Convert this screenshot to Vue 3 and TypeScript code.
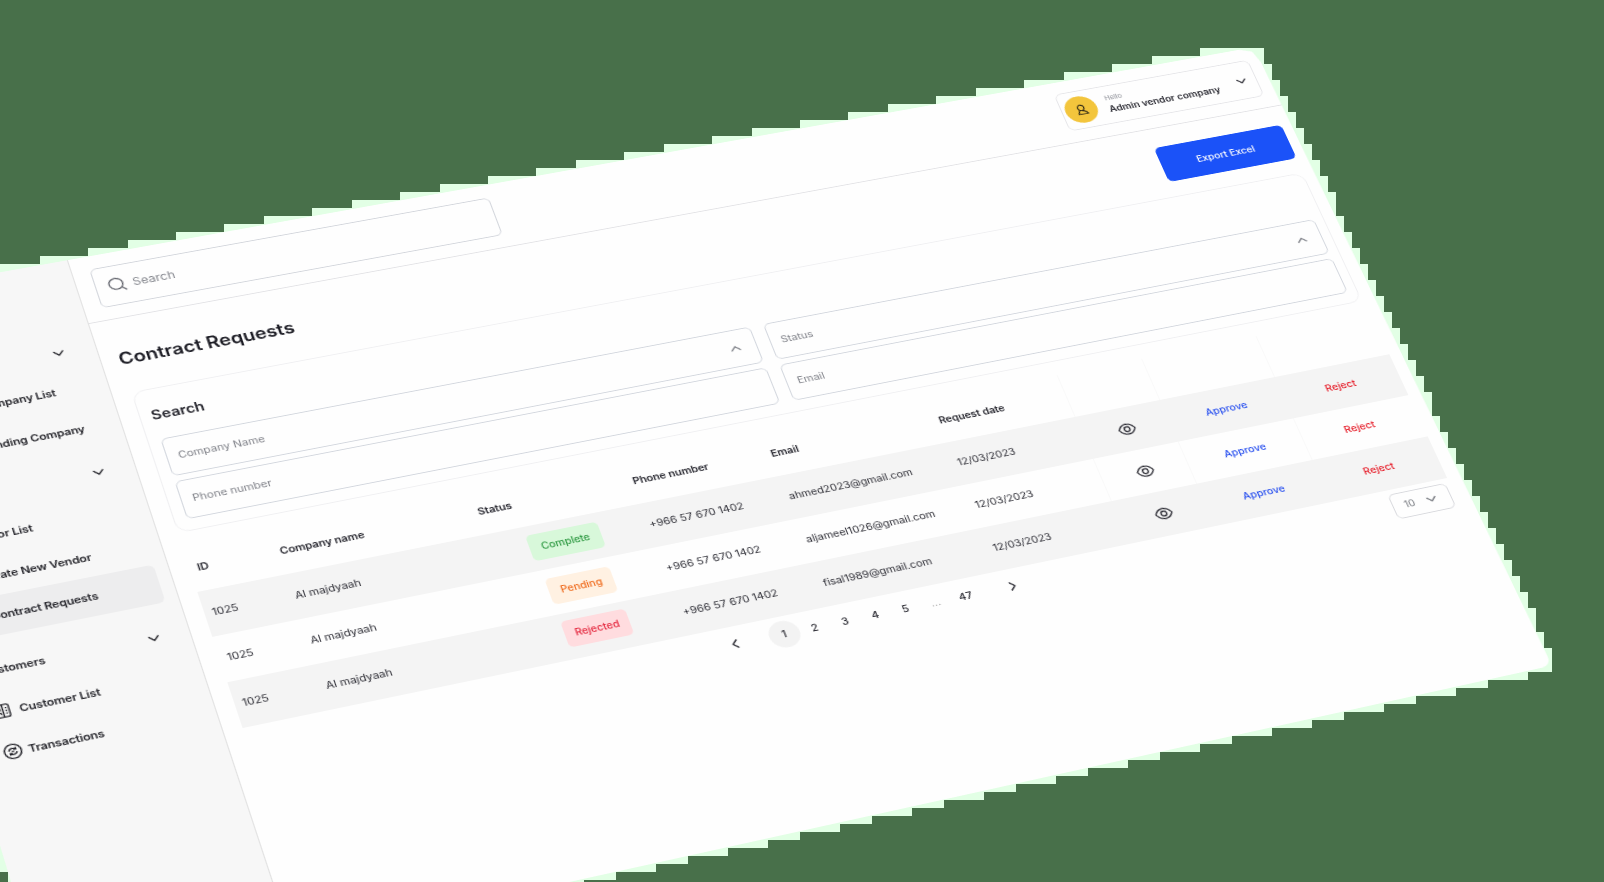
<script setup lang="ts">
interface Request {
  id: string
  company: string
  status: string
  phone: string
  email: string
  date: string
}

const requests: Request[] = [
  { id: '1025', company: 'Al majdyaah', status: 'Complete', phone: '+966 57 670 1402', email: 'ahmed2023@gmail.com', date: '12/03/2023' },
  { id: '1025', company: 'Al majdyaah', status: 'Pending', phone: '+966 57 670 1402', email: 'aljameel1026@gmail.com', date: '12/03/2023' },
  { id: '1025', company: 'Al majdyaah', status: 'Rejected', phone: '+966 57 670 1402', email: 'fisal1989@gmail.com', date: '12/03/2023' },
]

const pages: string[] = ['1', '2', '3', '4', '5', '...', '47']

// Page geometry, measured from the corner where the sidebar meets the header rule.
const LEFT = -216
const TOP = -76
const RIGHT = 1200
const BOTTOM = 686

// Coefficients of the perspective projection.
const a = 1274.6 / 1184
const b = 125.4 / 462
const c = 89
const d = -209.7 / 1184
const e = 377.5 / 462
const f = 324
const g = 0.07064 / 1184
const h = -0.04165 / 462

const pageStyle = {
  transform: `matrix3d(${a},${d},0,${g},${b},${e},0,${h},0,0,1,0,${c},${f},0,1) translate(${LEFT}px,${TOP}px)`,
}

type Point = [number, number]

function project(x: number, y: number): Point {
  const w = g * x + h * y + 1
  return [(a * x + b * y + c) / w, (d * x + e * y + f) / w]
}

// Stepped mat behind the page: every 8px block the page touches.
const STEP = 8
const corners: Point[] = [
  project(LEFT, TOP),
  project(RIGHT - 28, TOP),
  project(RIGHT - 12, TOP + 5),
  project(RIGHT - 7, TOP + 20),
  project(RIGHT, BOTTOM),
  project(LEFT, BOTTOM),
]

function span(y0: number, y1: number): Point | null {
  const xs: number[] = []
  corners.forEach((p, i) => {
    const q = corners[(i + 1) % corners.length]
    if (p[1] >= y0 && p[1] <= y1) xs.push(p[0])
    for (const y of [y0, y1]) {
      if ((p[1] - y) * (q[1] - y) < 0) xs.push(p[0] + ((y - p[1]) / (q[1] - p[1])) * (q[0] - p[0]))
    }
  })
  return xs.length ? [Math.min(...xs), Math.max(...xs)] : null
}

let mat = ''
for (let y = 0; y < 888; y += STEP) {
  const s = span(y, y + STEP)
  if (!s) continue
  const x0 = Math.floor(s[0] / STEP) * STEP
  const x1 = Math.ceil(s[1] / STEP) * STEP
  mat += `M${x0} ${y}H${x1}V${y + STEP}H${x0}Z`
}
</script>

<template>
  <div class="stage">
    <svg class="mat" width="1604" height="882" viewBox="0 0 1604 882"><path :d="mat" /></svg>
    <div class="page" :style="pageStyle">
      <aside class="sidebar">
        <div class="section"><span>Companies</span><svg class="chev" viewBox="0 0 12 12"><path d="M1.5 4 6 8.5 10.5 4" /></svg></div>
        <div class="item deep first">Company List</div>
        <div class="item deep second">Pending Company</div>
        <div class="section vendors"><span>Vendors</span><svg class="chev" viewBox="0 0 12 12"><path d="M1.5 4 6 8.5 10.5 4" /></svg></div>
        <div class="item"><i></i>Vendor List</div>
        <div class="item"><i></i>Create New Vendor</div>
        <div class="item active"><i></i>Contract Requests</div>
        <div class="section customers"><span>Customers</span><svg class="chev" viewBox="0 0 12 12"><path d="M1.5 4 6 8.5 10.5 4" /></svg></div>
        <div class="item">
          <svg class="glyph" viewBox="0 0 18 18"><rect x="2" y="2" width="14" height="14" rx="2" /><path d="M10 2v14M12.500 6h1.500M12.500 9h1.500M12.500 12h1.500M4 13c0-3 4-3 4 0" /><circle cx="6" cy="7.500" r="1.500" /></svg>
          Customer List
        </div>
        <div class="item last">
          <svg class="glyph" viewBox="0 0 18 18"><circle cx="9" cy="9" r="7.800" /><path d="M5.500 8.500C5.500 5.500 9.500 5 11.500 6.500M12 4.800v2.200h-2.200M12.500 9.500c0 3-4 3.500-6 2M6 13.200V11h2.200M8 9h2" /></svg>
          Transactions
        </div>
      </aside>
      <main class="main">
        <header class="header">
          <div class="searchbox">
            <svg viewBox="0 0 18 18"><circle cx="8" cy="8" r="6.700" /><path d="m13 13 4 4" /></svg>
            <span>Search</span>
          </div>
          <div class="profile">
            <div class="avatar"><svg viewBox="0 0 16 16"><circle cx="7.500" cy="5" r="3.600" /><path d="M5 8.500 2.500 14M8 9.500c3 0 5 2 6 4.500M2 14h12.500" /></svg></div>
            <div class="who"><small>Hello</small><b>Admin vendor company</b></div>
            <svg class="chev" viewBox="0 0 12 12"><path d="M1.500 4 6 8.500 10.500 4" /></svg>
          </div>
        </header>
        <div class="titlebar">
          <h1>Contract Requests</h1>
          <button>Export Excel</button>
        </div>
        <section class="panel">
          <h2>Search</h2>
          <div class="fields">
            <div class="field">Company Name<svg class="chev" viewBox="0 0 12 12"><path d="M1.500 8 6 3.500 10.500 8" /></svg></div>
            <div class="field">Status<svg class="chev" viewBox="0 0 12 12"><path d="M1.500 8 6 3.500 10.500 8" /></svg></div>
            <div class="field">Phone number</div>
            <div class="field">Email</div>
          </div>
        </section>
        <section class="table">
          <div class="row head">
            <span class="id">ID</span><span>Company name</span><span>Status</span><span>Phone number</span><span>Email</span><span>Request date</span>
            <span class="cell"></span><span class="cell"></span><span class="cell"></span>
          </div>
          <div v-for="(r, i) in requests" :key="i" class="row" :class="{ shaded: i % 2 === 0 }">
            <span class="id">{{ r.id }}</span>
            <span>{{ r.company }}</span>
            <span class="status"><em :class="r.status.toLowerCase()">{{ r.status }}</em></span>
            <span>{{ r.phone }}</span>
            <span class="email">{{ r.email }}</span>
            <span class="date">{{ r.date }}</span>
            <span class="cell"><svg class="eye" viewBox="0 0 18 18"><path d="M1 9c2-4 5-5.800 8-5.800S15 5 17 9c-2 4-5 5.800-8 5.800S3 13 1 9Z" /><circle cx="9" cy="9" r="2.700" /></svg></span>
            <span class="cell approve">Approve</span>
            <span class="cell reject">Reject</span>
          </div>
        </section>
        <footer class="pager">
          <nav>
            <svg class="arrow" viewBox="0 0 12 12"><path d="M8 1.500 3.500 6 8 10.500" /></svg>
            <span v-for="p in pages" :key="p" :class="{ current: p === '1', dots: p === '...' }">{{ p }}</span>
            <svg class="arrow next" viewBox="0 0 12 12"><path d="M4 1.500 8.500 6 4 10.500" /></svg>
          </nav>
          <div class="size">10<svg class="chev" viewBox="0 0 12 12"><path d="M1.500 4 6 8.500 10.500 4" /></svg></div>
        </footer>
      </main>
    </div>
  </div>
</template>

<style>
body { margin: 0; background: #48704a; }
</style>

<style scoped>
* { box-sizing: border-box; }
.stage {
  position: relative;
  width: 1604px;
  height: 882px;
  overflow: hidden;
  background: #48704a;
  font-family: Inter, "Liberation Sans", sans-serif;
  font-size: 10.500px;
  color: #2b2b33;
}
.mat { position: absolute; left: 0; top: 0; }
svg { fill: none; stroke: currentColor; stroke-width: 1.400; flex: none; }
svg.mat { fill: #e2ffe5; stroke: none; shape-rendering: crispEdges; }
.page {
  display: flex;
  width: 1416px;
  height: 762px;
  transform-origin: 0 0;
  background: #fefefe;
  border-radius: 10px 24px 10px 10px;
  overflow: hidden;
  clip-path: polygon(0 0, 1392px 0, 1404px 5px, 1408px 20px, 100% 100%, 0 100%);
}
.chev { width: 12px; height: 12px; }
.sidebar {
  width: 216px;
  flex: none;
  padding-top: 80px;
  background: #f7f7f7;
  border-right: 1px solid #e2e2e2;
  font-size: 11px;
  font-weight: 600;
  letter-spacing: -0.15px;
  color: #26262c;
}
.section { height: 43px; display: flex; align-items: center; justify-content: space-between; padding: 0 28px; }
.item { height: 43px; display: flex; align-items: center; padding-left: 27px; }
.item i, .glyph { width: 17px; height: 17px; margin-right: 7px; flex: none; }
.item.last { padding-left: 26px; }
.item.last .glyph { margin-right: 5px; }
.deep { padding-left: 96px; }
.first { height: 44px; }
.second { height: 45px; padding-left: 87px; }
.vendors { height: 52px; padding-top: 4px; padding-right: 27px; }
.active { height: 42px; margin-right: 12px; border-radius: 6px; background: #ededee; }
.customers { height: 57px; padding-top: 12px; padding-right: 26px; }
.main { flex: 1; min-width: 0; display: flex; flex-direction: column; }
.header {
  height: 76px;
  flex: none;
  padding: 0 20px 0 16px;
  display: flex;
  align-items: center;
  justify-content: space-between;
  border-bottom: 1px solid #e3e3e6;
}
.searchbox {
  width: 384px;
  height: 46px;
  display: flex;
  align-items: center;
  gap: 6px;
  padding-left: 11px;
  border: 1px solid #d3d6dc;
  border-radius: 6px;
  font-size: 12px;
  color: #85878e;
}
.searchbox svg { width: 17px; height: 17px; color: #64666e; }
.profile {
  width: 206px;
  height: 47px;
  display: flex;
  align-items: center;
  padding: 0 9px 0 3px;
  border: 1px solid #e6e6e9;
  border-radius: 7px;
}
.avatar { width: 33px; height: 33px; border-radius: 50%; background: #f3c53c; display: grid; place-items: center; color: #2c2615; }
.avatar svg { width: 14px; height: 14px; }
.who { flex: 1; display: flex; flex-direction: column; gap: 1px; padding-left: 11px; }
.who small { font-size: 7.500px; line-height: 10px; color: #8b8d95; }
.who b { font-weight: 600; font-size: 10.200px; line-height: 14px; white-space: nowrap; }
.titlebar { height: 84px; padding: 0 16px; display: flex; align-items: center; justify-content: space-between; }
h1 { margin: 6px 0 0; font-size: 18.400px; font-weight: 600; color: #1e1e26; }
button {
  width: 135px;
  height: 43px;
  margin: 5px 1px 0 0;
  padding: 0;
  border: 0;
  border-radius: 6px;
  background: #1b52f8;
  color: #fff;
  font: 500 10.300px Inter, sans-serif;
}
.panel { height: 162px; margin: 0 18px 0 17px; padding: 18px 10px 0 11px; border: 1px solid #f0f0f2; border-radius: 12px; }
h2 { margin: 0 0 16px -1px; height: 22px; line-height: 22px; font-size: 14.500px; font-weight: 600; color: #25252d; }
.fields { display: grid; grid-template-columns: 565px 565px; grid-auto-rows: 43px; gap: 6px 13px; }
.field {
  display: flex;
  align-items: center;
  justify-content: space-between;
  padding: 0 14px 0 10px;
  border: 1px solid #d3d7de;
  border-radius: 6px;
  font-size: 10.600px;
  color: #7f8188;
}
.table { margin: 16px 16px 0 17px; }
.row {
  height: 50px;
  display: grid;
  grid-template-columns: 83px 185px 148px 134px 166px 127px 86px 118px 118px;
  align-items: center;
}
.row.shaded { background: #f4f4f4; }
.row .id { padding-left: 7px; }
.head { font-weight: 600; height: 49.500px; letter-spacing: -0.1px; }
.email { padding-left: 1px; }
.date { padding-left: 1px; }
.status { display: flex; padding-left: 37px; }
.status em { width: 61px; height: 29px; line-height: 29px; text-align: center; border-radius: 5px; font-style: normal; font-weight: 500; font-size: 10px; }
.status .complete { width: 68px; margin-left: -3px; background: #d8f8da; color: #2f9a43; }
.pending { margin-top: -1px; background: #fff1e2; color: #ef6a1c; }
.rejected { margin-top: -4px; background: #ffdcdf; color: #e5283f; }
.cell { height: 100%; display: flex; align-items: center; justify-content: center; border-left: 1px solid #f9f9f9; font-weight: 500; }
.shaded .cell { border-color: transparent; }
.eye { width: 18px; height: 18px; color: #33333b; }
.approve { color: #2b52ef; }
.reject { color: #e6202c; }
.pager { margin: 5px 20px 0 16px; height: 29px; display: grid; grid-template-columns: 1fr auto; align-items: center; }
nav { display: flex; align-items: center; padding-left: 446.500px; }
nav span { width: 29.300px; height: 29.300px; line-height: 29.300px; text-align: center; font-weight: 500; }
.current { border-radius: 50%; background: #f3f3f3; }
.dots { font-weight: 400; color: #999; }
.arrow { width: 12px; height: 12px; margin-right: 26px; }
.arrow.next { margin: 0 0 0 25px; }
.size {
  width: 60px;
  height: 29px;
  display: flex;
  align-items: center;
  justify-content: space-between;
  padding: 0 13px 0 11px;
  border: 1px solid #d9dade;
  border-radius: 6px;
  color: #777a80;
}
</style>
